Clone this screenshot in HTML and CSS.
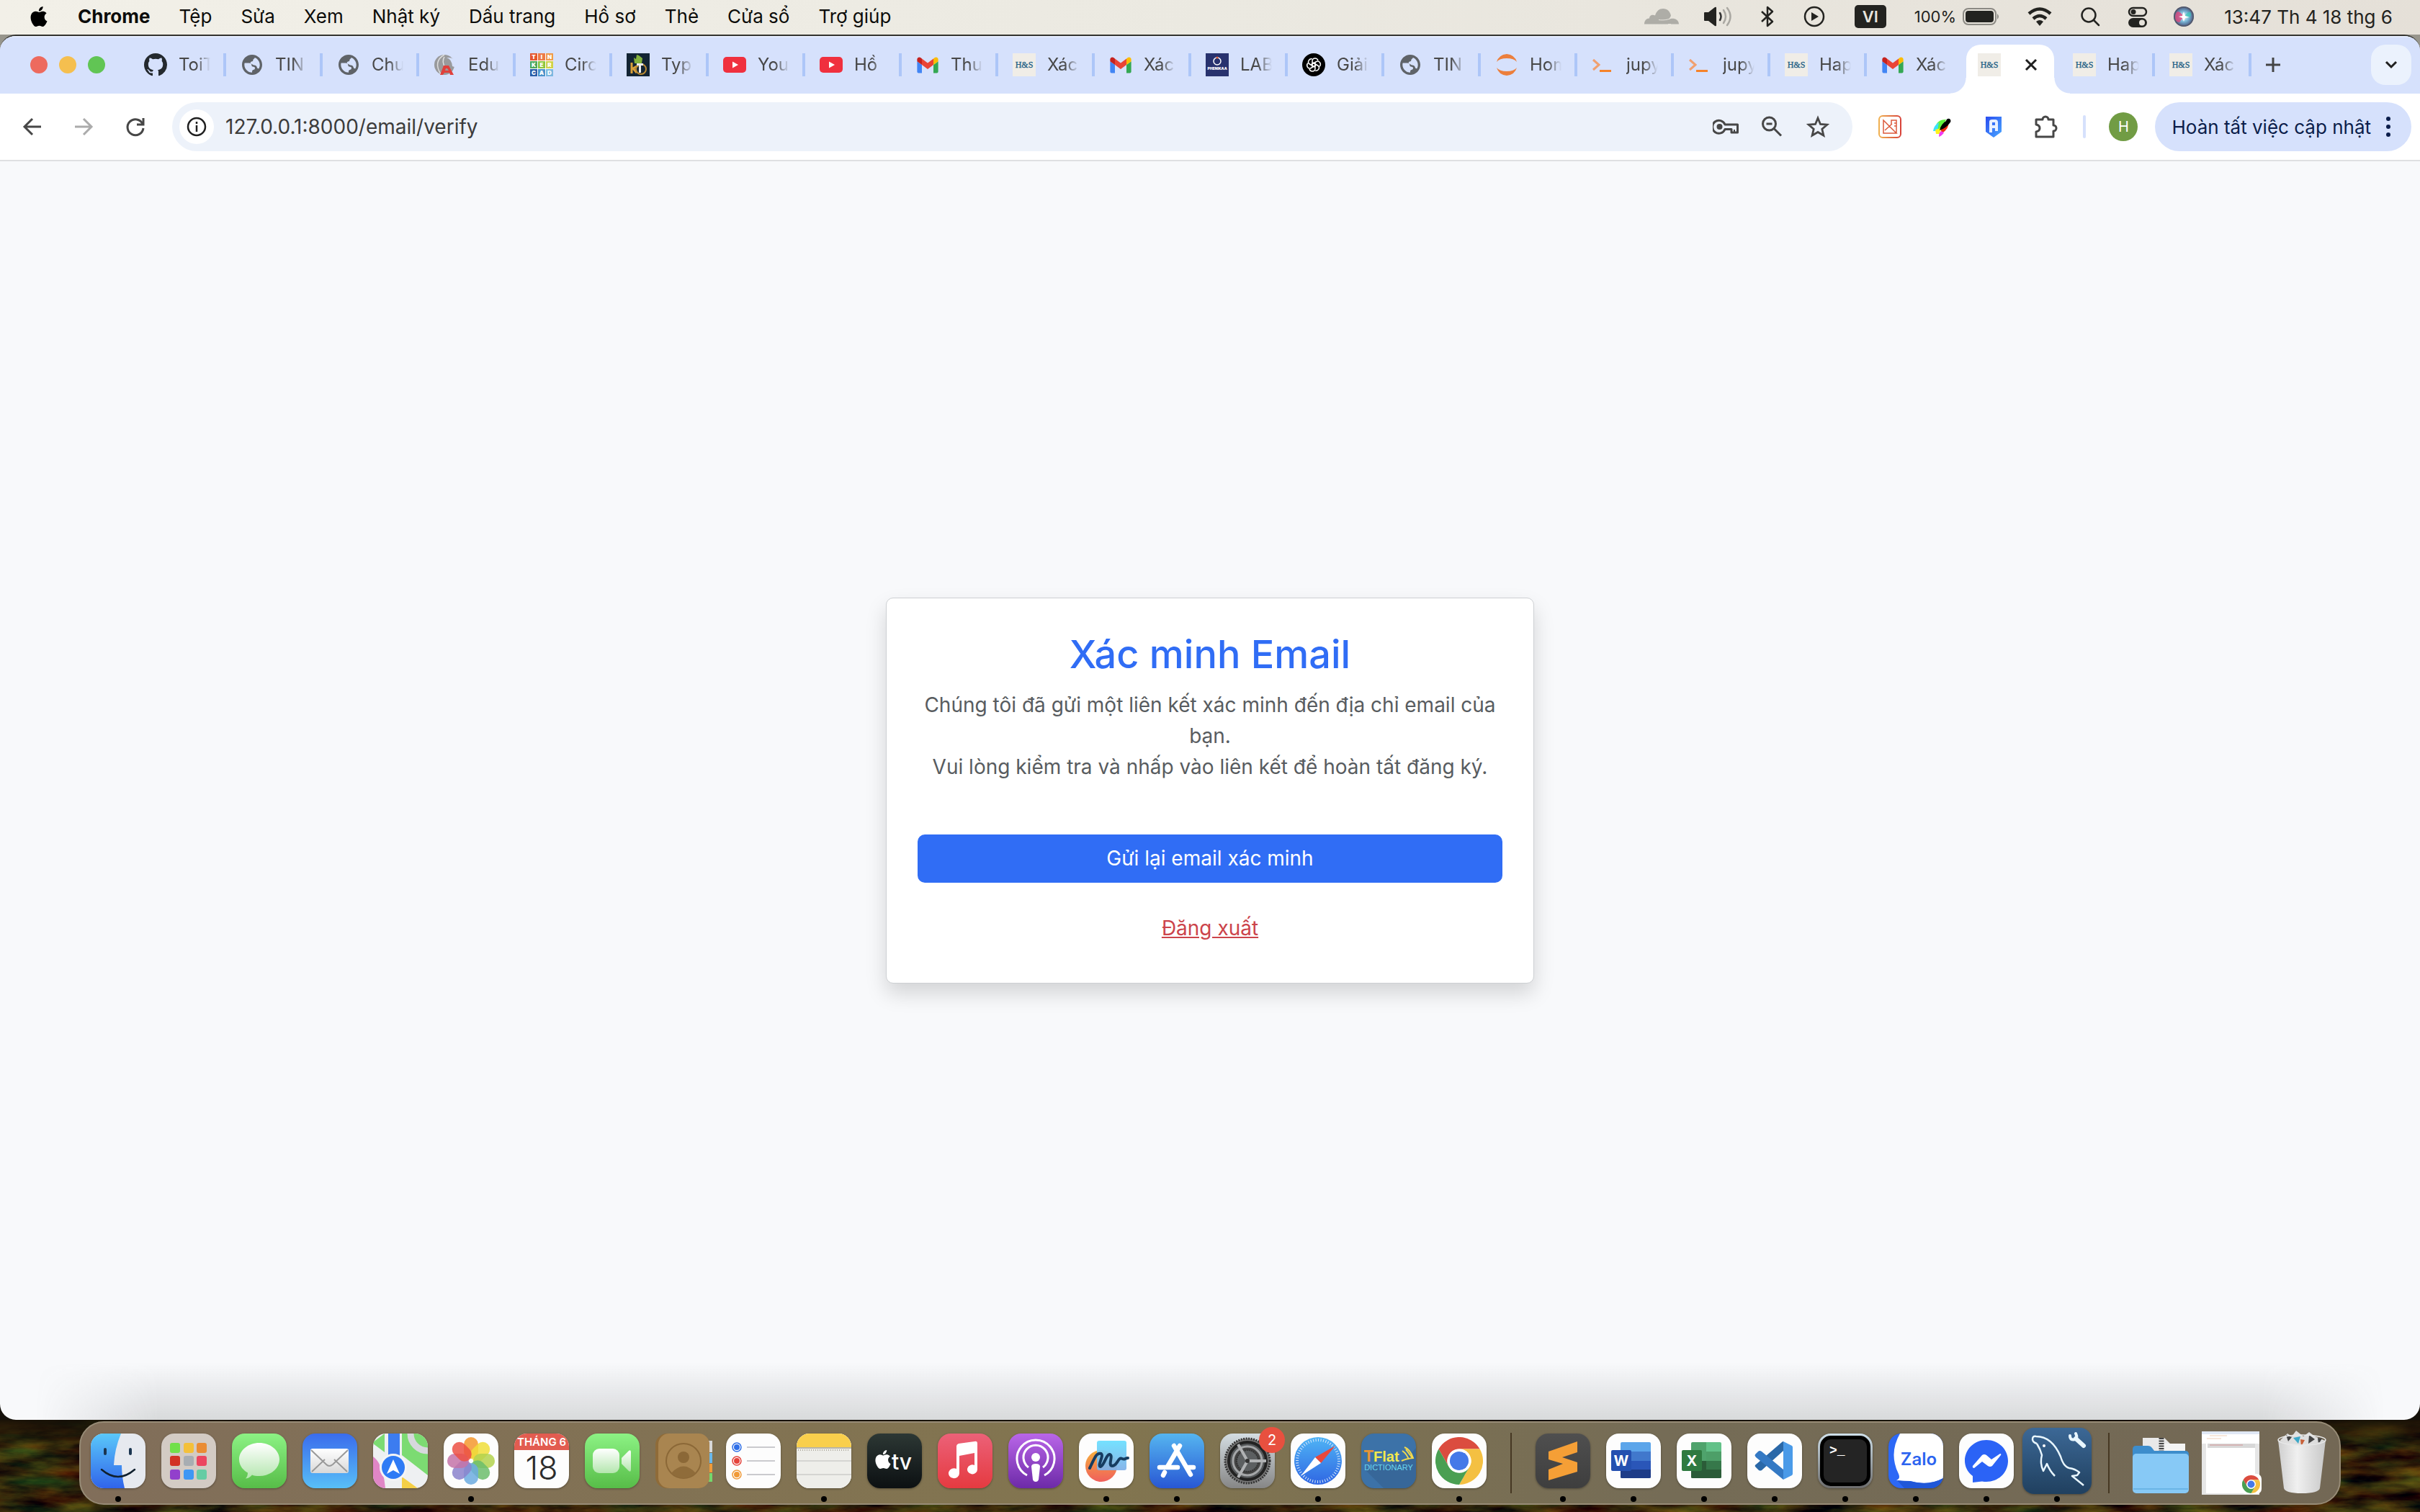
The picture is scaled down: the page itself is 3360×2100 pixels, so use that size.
FILE: index.html
```html
<!DOCTYPE html>
<html lang="vi">
<head>
<meta charset="utf-8">
<title>Xác minh Email</title>
<meta name="viewport" content="width=device-width, initial-scale=1">
<link rel="stylesheet" href="styles.css">
</head>
<body>
<svg class="defs" width="0" height="0" aria-hidden="true">
  <defs>
    <symbol id="apple" viewBox="0 0 24 24"><path d="M12.152 6.896c-.948 0-2.415-1.078-3.96-1.04-2.04.027-3.91 1.183-4.961 3.014-2.117 3.675-.546 9.103 1.519 12.09 1.013 1.454 2.208 3.09 3.792 3.039 1.52-.065 2.09-.987 3.935-.987 1.831 0 2.35.987 3.96.948 1.637-.026 2.676-1.48 3.676-2.948 1.156-1.688 1.636-3.325 1.662-3.415-.039-.013-3.182-1.221-3.22-4.857-.026-3.04 2.48-4.494 2.597-4.559-1.429-2.09-3.623-2.324-4.39-2.376-2-.156-3.675 1.09-4.61 1.09zM15.53 3.83c.843-1.012 1.4-2.427 1.245-3.83-1.207.052-2.662.805-3.532 1.818-.78.896-1.454 2.338-1.273 3.714 1.338.104 2.715-.688 3.559-1.701"/></symbol>
    <symbol id="globe" viewBox="0 0 24 24"><path fill="#5f6368" d="M12 1.500C6.200 1.500 1.500 6.200 1.500 12S6.200 22.500 12 22.500 22.500 17.800 22.500 12 17.800 1.500 12 1.500zm-1 18.430c-3.950-.49-7-3.850-7-7.930 0-.62.08-1.210.21-1.790H9c1.500 0 2.500 1 2.500 2.300 0 1 .8 1.500 2 1.500 1 0 1.500.6 1.500 1.500 0 1.200-1 1.500-1.800 1.700-1 .3-1.200 1-1.200 2.800zM17 14.500c-.3-1.600-1.500-2-2.800-2.100-1.400-.1-1.700-1-2.900-1.400-1.100-.4-1.400-1.300-.6-2 .9-.8 2.300-.3 2.300-1.900 0-1.300 1.600-1.300 1.900-2.600 2.900 1.200 5.100 4.200 5.100 7.500 0 1.500-.3 2.800-1 3.900-.9.300-1.800-.3-2-1.400z"/></symbol>
    <symbol id="github" viewBox="0 0 16 16"><path fill="#24292e" d="M8 0C3.580 0 0 3.580 0 8c0 3.540 2.290 6.530 5.470 7.590.4.07.55-.17.55-.38 0-.19-.01-.82-.01-1.490-2.010.37-2.530-.49-2.690-.94-.09-.23-.48-.94-.82-1.130-.28-.15-.68-.52-.01-.53.63-.01 1.080.58 1.230.82.72 1.210 1.870.87 2.330.66.07-.52.28-.87.51-1.070-1.780-.2-3.640-.89-3.640-3.950 0-.87.31-1.590.82-2.150-.08-.2-.36-1.020.08-2.120 0 0 .67-.21 2.200.82.64-.18 1.320-.27 2-.27s1.360.09 2 .27c1.530-1.040 2.200-.82 2.200-.82.44 1.100.16 1.920.08 2.120.51.56.82 1.270.82 2.150 0 3.070-1.870 3.750-3.650 3.950.29.25.54.73.54 1.480 0 1.070-.01 1.930-.01 2.200 0 .21.15.46.55.38A8.010 8.010 0 0 0 16 8c0-4.420-3.580-8-8-8z"/></symbol>
    <symbol id="gmail" viewBox="-24 -7 560 512"><path fill="#4285f4" d="M35 449h81V251L0 164v250c0 19 16 35 35 35z"/><path fill="#34a853" d="M396 449h81c19 0 35-16 35-35V164l-116 87z"/><path fill="#fbbc04" d="M396 100v151l116-87v-47c0-43-49-68-84-42z"/><path fill="#ea4335" d="M116 251V100l140 104 140-104v151L256 356z"/><path fill="#c5221f" d="M0 117v47l116 87V100L84 75C49 49 0 74 0 117z"/></symbol>
    <symbol id="youtube" viewBox="0 0 32 32"><rect y="5" width="32" height="22" rx="5" fill="#f0303e"/><path fill="#fff" d="M13 11.500v9l8-4.500z"/></symbol>
    <symbol id="hs" viewBox="0 0 32 32"><rect width="32" height="32" fill="#f0ede7"/><text x="16" y="20" text-anchor="middle" font-family="Liberation Serif, serif" font-size="12" fill="#1f5f85" stroke="#1f5f85" stroke-width=".3">H&amp;S</text></symbol>
    <symbol id="prompt" viewBox="0 0 32 32"><path d="M2 9l8 7-8 7" fill="none" stroke="#f0a070" stroke-width="3"/><rect x="11" y="23" width="16" height="3" fill="#f5832a"/></symbol>
    <symbol id="chrome" viewBox="0 0 48 48"><path fill="#db4c3f" d="M24 12h20.800A24 24 0 0 0 3.200 12l10.400 18A12 12 0 0 1 24 12z"/><path fill="#f4c042" d="M34.400 30L24 48a24 24 0 0 0 20.800-36H24a12 12 0 0 1 10.400 18z"/><path fill="#4a9f52" d="M13.600 30L3.200 12A24 24 0 0 0 24 48l10.400-18a12 12 0 0 1-20.800 0z"/><circle cx="24" cy="24" r="12" fill="#fff"/><circle cx="24" cy="24" r="9.500" fill="#4579e8"/></symbol>
    <linearGradient id="gFace" x2="0" y2="1"><stop stop-color="#5ac8fa"/><stop offset="1" stop-color="#3064ea"/></linearGradient>
    <linearGradient id="gSteel" x2="0" y2="1"><stop stop-color="#fff"/><stop offset="1" stop-color="#d8d8d8"/></linearGradient>
    <linearGradient id="gMint" x2="0" y2="1"><stop stop-color="#fff"/><stop offset="1" stop-color="#b4e6ae"/></linearGradient>
    <linearGradient id="gSafari" x2="0" y2="1"><stop stop-color="#4fb4f5"/><stop offset="1" stop-color="#2f66e3"/></linearGradient>
    <linearGradient id="gCyan" x2="0" y2="1"><stop stop-color="#6adfff"/><stop offset="1" stop-color="#7fb0e8"/></linearGradient>
    <linearGradient id="gSun" x2="0" y2="1"><stop stop-color="#f5b03c"/><stop offset="1" stop-color="#f0605c"/></linearGradient>
    <linearGradient id="gExt"><stop stop-color="#f0b050"/><stop offset="1" stop-color="#d8433a"/></linearGradient>
    <linearGradient id="gShield" x2="1" y2="1"><stop stop-color="#2a4cf0"/><stop offset="1" stop-color="#4aa8ff"/></linearGradient>
    <radialGradient id="gSiri"><stop stop-color="#fff"/><stop offset=".5" stop-color="#7ab8d8"/><stop offset="1" stop-color="#48507a"/></radialGradient>
    <linearGradient id="gBin"><stop stop-color="#cfcfcf"/><stop offset=".4" stop-color="#f0f0f0"/><stop offset="1" stop-color="#c8c8c8"/></linearGradient>
    <filter id="field" x="0" y="0" width="100%" height="100%" color-interpolation-filters="sRGB">
      <feTurbulence type="fractalNoise" baseFrequency=".012 .05" numOctaves="5" seed="4"/>
      <feColorMatrix values=".6 .3 0 0 -.25  .3 .5 0 0 -.25  0 .1 0 0 -.01  0 0 0 0 1"/>
    </filter>
  </defs>
</svg>

<header class="menubar">
  <nav class="menus" aria-label="Thanh menu">
    <svg class="menu-logo"><use href="#apple"/></svg>
    <button class="menu menu-app">Chrome</button>
    <button class="menu">Tệp</button>
    <button class="menu">Sửa</button>
    <button class="menu">Xem</button>
    <button class="menu">Nhật ký</button>
    <button class="menu">Dấu trang</button>
    <button class="menu">Hồ sơ</button>
    <button class="menu">Thẻ</button>
    <button class="menu">Cửa sổ</button>
    <button class="menu">Trợ giúp</button>
  </nav>
  <div class="status">
    <svg width="48" height="32" viewBox="0 0 48 32"><path fill="#aeada7" d="M0 26.500c0-5 3-8 7-8 0-4 4-6 8-4C17 8 21 5 26 5c6 0 10 4 11 10l-3 5c5-3 14-1 14 6.500z"/><path d="M33 26.500h4M20 20.500c6 1 14 0 18-3" stroke="#e8e5de" fill="none"/></svg>
    <svg width="46" height="32" viewBox="0 0 46 32"><path fill="#232320" d="M1 11q0-1 1-1h5l9-7q2-1 2 1v24q0 2-2 1l-9-7H2q-1 0-1-1z"/><g fill="none" stroke-width="2.500" stroke-linecap="round"><path stroke="#333" d="M23 11q3 5 0 10"/><path stroke="#aaa8a2" d="M28 7q6 9 0 18M33 4q9 12 0 24"/></g></svg>
    <svg width="18" height="32" viewBox="0 0 18 32"><path d="M1 9l15 14-7 6V3l7 6L1 23" fill="none" stroke="#232320" stroke-width="2.500" stroke-linejoin="round"/></svg>
    <svg width="44" height="32" viewBox="0 0 44 32"><circle cx="22" cy="16" r="13" fill="none" stroke="#232320" stroke-width="2.500"/><path fill="#232320" d="M18 10v12l10-6z"/></svg>
    <span class="input-source">VI</span>
    <span class="battery">100%<svg width="53" height="32" viewBox="0 0 53 32"><rect x="1" y="5" width="45" height="22" rx="7" fill="none" stroke="#8b8983" stroke-width="2"/><rect x="4" y="8" width="39" height="16" rx="4" fill="#232320"/><path fill="#8b8983" d="M48 12q4 4 0 8z"/></svg></span>
    <svg width="40" height="32" viewBox="0 0 40 32"><g fill="none" stroke="#232320" stroke-width="4.500"><path d="M5 12q15-13 30 0"/><path d="M11 19q9-8 18 0"/></g><path fill="#232320" d="M15 23q5-4 10 0l-5 6z"/></svg>
    <svg width="32" height="32" viewBox="0 0 32 32"><g fill="none" stroke="#232320" stroke-width="2.500" stroke-linecap="round"><circle cx="14" cy="14" r="9.500"/><path d="M21 21l7 7"/></g></svg>
    <svg width="32" height="32" viewBox="0 0 32 32"><rect x="4" y="4" width="24" height="11" rx="5.500" fill="none" stroke="#232320" stroke-width="2.500"/><circle cx="10" cy="9.500" r="3.500" fill="#232320"/><rect x="3" y="18" width="26" height="13" rx="6.500" fill="#232320"/><circle cx="22" cy="24.500" r="4" fill="#e6e2da"/></svg>
    <svg width="28" height="32" viewBox="0 0 28 32"><circle cx="14" cy="16" r="14" fill="url(#gSiri)"/><path fill="#e0467c" opacity=".8" d="M14 16Q4 2 2 16q0 8 6 8z"/><path fill="#38c8b8" opacity=".7" d="M14 16Q24 4 24 14q-2 6-10 2z"/><circle cx="14" cy="16" r="13" fill="none" stroke="#555" stroke-width="1.500" opacity=".6"/><path fill="#fff" d="M14 9l2 6 6 2-6 1-2 5-2-5-5-2 5-1z"/></svg>
    <time class="clock">13:47 Th 4 18 thg 6</time>
  </div>
</header>

<div class="window">
  <div class="tabstrip">
    <div class="lights"><button class="light light-close" aria-label="Đóng"></button><button class="light light-min" aria-label="Thu nhỏ"></button><button class="light light-max" aria-label="Phóng to"></button></div>
    <div class="tabs">
      <button class="tab"><svg class="fav"><use href="#github"/></svg><span class="tab-title">ToiT</span></button>
      <button class="tab"><svg class="fav"><use href="#globe"/></svg><span class="tab-title">TIN</span></button>
      <button class="tab"><svg class="fav"><use href="#globe"/></svg><span class="tab-title">Chu</span></button>
      <button class="tab"><svg class="fav" viewBox="0 0 32 32"><circle cx="15" cy="16" r="14" fill="#999a9c"/><path fill="#d6e1fc" d="M32 14q-3-9-14-8 7 2 8 12l6 2z"/><path d="M15 2Q-1 11 10 29M15 5q-4 6 1 15" stroke="#ddd" fill="none" stroke-width="1.500"/><path fill="#e0403c" d="M14 17h7l7 13h-5l-1-3h-7l-2 3H9zm3 4l-1 3h5l-2-3z"/></svg><span class="tab-title">Edu</span></button>
      <button class="tab"><svg class="fav" viewBox="0 0 32 32"><rect width="32" height="32" fill="#fff"/><g><path fill="#e4572e" d="M0 0h10v10H0z"/><path fill="#ec7a48" d="M11 0h10v10H11z"/><path fill="#f09a4a" d="M22 0h10v10H22z"/><path fill="#4da85c" d="M0 11h10v10H0z"/><path fill="#8cc63f" d="M11 11h10v10H11z"/><path fill="#cfd24a" d="M22 11h10v10H22z"/><path fill="#2a5da8" d="M0 22h10v10H0z"/><path fill="#4b93cc" d="M11 22h10v10H11z"/><path fill="#7cb8e0" d="M22 22h10v10H22z"/></g><g fill="#fff" font-family="Inter, sans-serif" font-weight="900" font-size="8" text-anchor="middle"><text x="5" y="8">T</text><text x="16" y="8">I</text><text x="27" y="8">N</text><text x="5" y="19">K</text><text x="16" y="19">E</text><text x="27" y="19">R</text><text x="5" y="30">C</text><text x="16" y="30">A</text><text x="27" y="30">D</text></g></svg><span class="tab-title">Circ</span></button>
      <button class="tab"><svg class="fav" viewBox="0 0 32 32"><rect width="32" height="32" fill="#122433"/><path fill="#84b23c" d="M10 6l3 2 1-6 3 1 5 4-1 7H11z"/><path stroke="#d9a03a" stroke-width="3" fill="none" d="M7 13v15M16 17l-7 4 5 6"/><circle cx="20" cy="22" r="7" fill="none" stroke="#b98a34" stroke-width="2"/><path fill="#eee" d="M14 14h9v3h-3v10h-3V17h-3z"/></svg><span class="tab-title">Typ</span></button>
      <button class="tab"><svg class="fav"><use href="#youtube"/></svg><span class="tab-title">You</span></button>
      <button class="tab"><svg class="fav"><use href="#youtube"/></svg><span class="tab-title">Hồ</span></button>
      <button class="tab"><svg class="fav"><use href="#gmail"/></svg><span class="tab-title">Thu</span></button>
      <button class="tab"><svg class="fav"><use href="#hs"/></svg><span class="tab-title">Xác</span></button>
      <button class="tab"><svg class="fav"><use href="#gmail"/></svg><span class="tab-title">Xác</span></button>
      <button class="tab"><svg class="fav" viewBox="0 0 32 32"><rect width="32" height="32" fill="#28326e"/><circle cx="16" cy="11" r="5" fill="none" stroke="#fff" stroke-width="1.500"/><circle cx="16" cy="6" r="1.500" fill="#e0603c"/><text x="16" y="23" text-anchor="middle" font-family="Inter, sans-serif" font-size="5" font-weight="900" fill="#fff">PHENIKAA</text></svg><span class="tab-title">LAB</span></button>
      <button class="tab"><svg class="fav" viewBox="0 0 32 32"><circle cx="16" cy="16" r="16" fill="#000"/><g fill="none" stroke="#fff" stroke-width="1.500"><path id="petal" d="M14 19v-8q0-4 4-4 3 0 4 3"/><use href="#petal" transform="rotate(60 16 16)"/><use href="#petal" transform="rotate(120 16 16)"/><use href="#petal" transform="rotate(180 16 16)"/><use href="#petal" transform="rotate(240 16 16)"/><use href="#petal" transform="rotate(300 16 16)"/></g></svg><span class="tab-title">Giải</span></button>
      <button class="tab"><svg class="fav"><use href="#globe"/></svg><span class="tab-title">TIN</span></button>
      <button class="tab"><svg class="fav" viewBox="0 0 32 32"><path fill="#ec7f3c" d="M2 12q3-10 14-11 11 1 14 11-4-5-14-5T2 12zM2 20q3 10 14 11 11-1 14-11-4 5-14 5T2 20z"/></svg><span class="tab-title">Hom</span></button>
      <button class="tab"><svg class="fav"><use href="#prompt"/></svg><span class="tab-title">jupy</span></button>
      <button class="tab"><svg class="fav"><use href="#prompt"/></svg><span class="tab-title">jupy</span></button>
      <button class="tab"><svg class="fav"><use href="#hs"/></svg><span class="tab-title">Hap</span></button>
      <button class="tab tab-before"><svg class="fav"><use href="#gmail"/></svg><span class="tab-title">Xác</span></button>
      <button class="tab-active" aria-label="Xác minh Email"><svg class="fav"><use href="#hs"/></svg><svg class="tab-close" viewBox="0 0 24 24"><path d="M5 5l14 14M19 5L5 19" stroke="#1f1f1f" stroke-width="3"/></svg></button>
      <button class="tab"><svg class="fav"><use href="#hs"/></svg><span class="tab-title">Hap</span></button>
      <button class="tab"><svg class="fav"><use href="#hs"/></svg><span class="tab-title">Xác</span></button>
    </div>
    <button class="new-tab" aria-label="Thẻ mới"><svg width="24" height="24" viewBox="0 0 24 24"><path d="M12 2v20M2 12h20" stroke="#444" stroke-width="3"/></svg></button>
    <button class="tab-search" aria-label="Tìm kiếm thẻ"><svg width="24" height="24" viewBox="0 0 24 24"><path d="M5 8l7 7 7-7" fill="none" stroke="#1f1f1f" stroke-width="3"/></svg></button>
  </div>

  <div class="toolbar">
    <button class="nav-btn" aria-label="Quay lại"><svg width="32" height="32" viewBox="0 0 32 32"><path d="M27 16H4M15 5L4 16l11 11" fill="none" stroke="#474747" stroke-width="3"/></svg></button>
    <button class="nav-btn" aria-label="Tiến"><svg width="32" height="32" viewBox="0 0 32 32"><path d="M3 16h23M15 5l11 11-11 11" fill="none" stroke="#ababab" stroke-width="3"/></svg></button>
    <button class="nav-btn" aria-label="Tải lại"><svg width="32" height="32" viewBox="0 0 32 32"><path d="M26 12A11 11 0 1 0 27 18" fill="none" stroke="#474747" stroke-width="3"/><path d="M27 4v9h-9" fill="none" stroke="#474747" stroke-width="3"/></svg></button>
    <div class="omnibox">
      <button class="site-info" aria-label="Thông tin trang"><svg width="28" height="28" viewBox="0 0 28 28"><circle cx="14" cy="14" r="12" fill="none" stroke="#1f1f1f" stroke-width="2.500"/><path d="M14 12v9M14 7v3" stroke="#1f1f1f" stroke-width="2.500"/></svg></button>
      <input class="url" type="text" aria-label="Địa chỉ" value="127.0.0.1:8000/email/verify">
      <button class="omni-btn" aria-label="Mật khẩu"><svg width="36" height="32" viewBox="0 0 36 32"><g fill="none" stroke="#474747" stroke-width="3"><path d="M17 13A9 9 0 1 0 17 19.500H26V24H34.500V13z" stroke-linejoin="round"/></g><circle cx="9.500" cy="16" r="4" fill="#474747"/><path d="M30 20v4" stroke="#474747" stroke-width="2"/></svg></button>
      <button class="omni-btn" aria-label="Thu phóng"><svg width="32" height="32" viewBox="0 0 32 32"><g fill="none" stroke="#474747" stroke-width="3"><circle cx="12.500" cy="12" r="9"/><path d="M19 18.500l10 10M8.500 12h8"/></g></svg></button>
      <button class="omni-btn" aria-label="Dấu trang"><svg width="32" height="32" viewBox="0 0 32 32"><path d="M16 4l3.500 8.500 9.300.7-7 6 2.100 9L16 23.500l-7.900 4.700 2.100-9-7-6 9.300-.7z" fill="none" stroke="#474747" stroke-width="2.800"/></svg></button>
    </div>
    <div class="extensions">
      <button class="ext-btn" aria-label="Tiện ích thước"><svg width="32" height="32" viewBox="0 0 32 32"><rect x="1" y="1" width="30" height="30" rx="5" fill="none" stroke="url(#gExt)" stroke-width="2"/><path d="M7 7v18h18zM18 14V7h7v18M11 11l12 12M9 21l10-9M22 11h3M22 15h3" fill="none" stroke="#dc5a3c" stroke-width="1.500"/></svg></button>
      <button class="ext-btn" aria-label="Tiện ích bút màu"><svg width="32" height="32" viewBox="0 0 32 32"><path fill="#61f23c" d="M22 6Q8 6 7 19l8 2z"/><path fill="#3ce0ff" d="M12 10q-7 4-8 12h6z"/><path fill="#fff21c" d="M7 20l8-2-2 8H8z"/><path fill="#f02c10" d="M25 9q2 10-10 17V18z"/><path fill="#f23cf2" d="M12 30q0-6 3-8l4 2q-2 4-7 6z"/><path fill="#000" d="M13 21q2-9 9-13 1-4 5-3 3 3 0 6-5 7-14 10z"/></svg></button>
      <button class="ext-btn" aria-label="Tiện ích lá chắn"><svg width="32" height="32" viewBox="0 0 32 32"><path fill="url(#gShield)" d="M5 2h22v21l-11 8-11-8z"/><path fill="none" stroke="#e8f0ff" stroke-width="4" d="M12 24V9q0-1 2-1h4q2 0 2 2v12M12 16h8"/></svg></button>
      <button class="ext-btn" aria-label="Tiện ích"><svg width="36" height="36" viewBox="0 0 36 36"><path d="M5 8h9a4 4 0 0 1 8 0h7v8a4 4 0 0 1 0 8v8H5v-7q5-1 5-5t-5-5z" fill="none" stroke="#474747" stroke-width="3" stroke-linejoin="round"/></svg></button>
    </div>
    <span class="divider"></span>
    <button class="avatar" aria-label="Hồ sơ H">H</button>
    <button class="update">Hoàn tất việc cập nhật<svg width="8" height="32" viewBox="0 0 8 32"><g fill="#0b1d4a"><circle cx="4" cy="5" r="3"/><circle cx="4" cy="16" r="3"/><circle cx="4" cy="27" r="3"/></g></svg></button>
  </div>

  <main class="page">
    <section class="card">
      <h2 class="card-title">Xác minh Email</h2>
      <p class="card-text">Chúng tôi đã gửi một liên kết xác minh đến địa chỉ email của bạn.<br>Vui lòng kiểm tra và nhấp vào liên kết để hoàn tất đăng ký.</p>
      <button class="btn-primary">Gửi lại email xác minh</button>
      <a class="logout" href="#logout">Đăng xuất</a>
    </section>
  </main>
</div>

<footer class="desk">
  <svg class="wallpaper" aria-hidden="true"><rect width="100%" height="100%" filter="url(#field)"/></svg>
  <nav class="dock" aria-label="Dock">
    <div class="slot running"><span class="app"><svg viewBox="0 0 76 76"><path fill="#e6e9ef" d="M0 0h76v76H0z"/><path fill="url(#gFace)" d="M0 0h42Q33 22 32 44h11q0 16 4 32H0z"/><path d="M20 22v6M55 22v6" stroke="#1b3550" stroke-width="4" stroke-linecap="round"/><path d="M15 50q23 20 46 0" fill="none" stroke="#10202e" stroke-width="2.500" stroke-linecap="round"/></svg></span></div>
    <div class="slot"><span class="app app-launch"><svg viewBox="0 0 76 76"><g><rect x="12" y="13" width="14" height="14" rx="3" fill="#71e04a"/><rect x="31" y="13" width="14" height="14" rx="3" fill="#f4c03a"/><rect x="49" y="13" width="14" height="14" rx="3" fill="#ea8c34"/><rect x="12" y="31" width="14" height="14" rx="3" fill="#d23325"/><rect x="31" y="31" width="14" height="14" rx="3" fill="#a8adb2"/><rect x="49" y="31" width="14" height="14" rx="3" fill="#ec4560"/><rect x="12" y="50" width="14" height="14" rx="3" fill="#9240cc"/><rect x="31" y="50" width="14" height="14" rx="3" fill="#3e97f4"/><rect x="49" y="50" width="14" height="14" rx="3" fill="#66cca4"/></g></svg></span></div>
    <div class="slot"><span class="app app-green"><svg viewBox="0 0 76 76"><path fill="url(#gMint)" d="M38 13c15 0 28 10 28 23S53 59 38 59c-4 0-8-.5-10-1.500-2 2-5 5-9 5 2-2 3-5 3-8C14 50 10 43 10 36c0-13 13-23 28-23z"/></svg></span></div>
    <div class="slot"><span class="app app-mail"><svg viewBox="0 0 76 76"><rect x="11" y="21" width="53" height="34" rx="3" fill="url(#gSteel)"/><path d="M13 53l18-17M62 53L44 36M12 23l21 20q4 4 9 0l21-20" fill="none" stroke="#999" stroke-width="2"/></svg></span></div>
    <div class="slot"><span class="app"><svg viewBox="0 0 76 76"><path fill="#eef0f2" d="M0 0h76v76H0z"/><path fill="#7cdb72" d="M0 12L16 0v26L0 14zM40 0h36v58L40 30z"/><circle cx="76" cy="0" r="24" fill="none" stroke="#d6d8dc" stroke-width="9"/><path fill="#e086c6" d="M0 32q14 10 17 44H0z"/><path fill="#f5cf46" d="M40 60l22 16H40z"/><path fill="#3c7cf0" d="M21 0h16v32H21z"/><circle cx="28" cy="47" r="19" fill="#f4f4f6"/><circle cx="28" cy="47" r="16" fill="#2f7bf5"/><path fill="#fff" d="M28 36l9 20-9-5-9 5z"/></svg></span></div>
    <div class="slot running"><span class="app app-white"><svg viewBox="0 0 76 76"><g transform="translate(38 38)" fill-opacity=".85"><rect x="-10" y="-33" width="20" height="30" rx="10" fill="#f5982e"/><rect x="-10" y="-33" width="20" height="30" rx="10" fill="#f0de3a" transform="rotate(45)"/><rect x="-10" y="-33" width="20" height="30" rx="10" fill="#b3d24e" transform="rotate(90)"/><rect x="-10" y="-33" width="20" height="30" rx="10" fill="#6cbd6c" transform="rotate(135)"/><rect x="-10" y="-33" width="20" height="30" rx="10" fill="#6cabe0" transform="rotate(180)"/><rect x="-10" y="-33" width="20" height="30" rx="10" fill="#8b83cc" transform="rotate(225)"/><rect x="-10" y="-33" width="20" height="30" rx="10" fill="#c473a8" transform="rotate(270)"/><rect x="-10" y="-33" width="20" height="30" rx="10" fill="#ec5044" transform="rotate(315)"/></g></svg></span></div>
    <div class="slot"><span class="app app-white app-cal"><span class="cal-month">THÁNG 6</span><span class="cal-day">18</span></span></div>
    <div class="slot"><span class="app app-green"><svg viewBox="0 0 76 76"><rect x="11" y="21" width="37" height="34" rx="9" fill="url(#gMint)"/><path fill="url(#gMint)" d="M51 34l10-10q3-2 3 2v24q0 4-3 2L51 42z"/></svg></span></div>
    <div class="slot"><span class="app app-contacts"><svg viewBox="0 0 76 76"><path fill="#d8d8d8" d="M72 10h7v16h-7z"/><path fill="#68b8ec" d="M72 27h7v14h-7z"/><path fill="#f09a38" d="M72 42h7v12h-7z"/><path fill="#74d86c" d="M72 55h7v12h-7z"/><rect width="75" height="76" rx="16" fill="#8f6b38"/><rect x="4" width="71" height="76" rx="15" fill="#a98550"/><g fill="none" stroke="#8b6837" stroke-width="2"><circle cx="39" cy="38" r="24"/></g><circle cx="39" cy="33" r="8" fill="#8b6837"/><path fill="#8f6c3a" d="M22 55q17-19 34 0-17 14-34 0z"/></svg></span></div>
    <div class="slot"><span class="app app-white"><svg viewBox="0 0 76 76"><g fill="none" stroke-width="1.500"><circle cx="15" cy="19" r="6" stroke="#2f6fe8"/><circle cx="15" cy="38" r="6" stroke="#e5433c"/><circle cx="15" cy="57" r="6" stroke="#f09a38"/></g><circle cx="15" cy="19" r="4" fill="#2f6fe8"/><circle cx="15" cy="38" r="4" fill="#e5433c"/><circle cx="15" cy="57" r="4" fill="#f09a38"/><path d="M29 19h39M29 38h39M29 57h39" stroke="#b9b9be" stroke-width="1.500"/></svg></span></div>
    <div class="slot running"><span class="app app-white"><svg viewBox="0 0 76 76"><path fill="#eeeeea" d="M0 0h76v76H0z"/><path fill="#f9cf4c" d="M0 0h76v19H0z"/><path d="M0 20h76" stroke="#b8b4a8" stroke-width="2"/><path d="M2 23h72" stroke="#b0aca0" stroke-width="2" stroke-dasharray="1 2"/><path d="M0 38h76M0 57h76" stroke="#d5d5d2" stroke-width="2"/></svg></span></div>
    <div class="slot"><span class="app app-tv"><svg viewBox="0 0 76 76"><use href="#apple" x="9" y="22" width="26" height="28" fill="#fff"/><text x="34" y="50" font-family="Inter, sans-serif" font-size="30" font-weight="500" fill="#fff">tv</text></svg></span></div>
    <div class="slot"><span class="app app-music"><svg viewBox="0 0 76 76"><path fill="#fff" d="M26 18q0-3 3-4l22-3q4-1 4 3v36a7 6.500 0 1 1-4-6V27l-21 4v24a7.500 7 0 1 1-4-6z"/></svg></span></div>
    <div class="slot"><span class="app app-podcast"><svg viewBox="0 0 76 76"><g fill="none" stroke="#fff" stroke-width="3"><path d="M26 58a26 26 0 1 1 24 0"/><path d="M28 47a17 17 0 1 1 20 0"/></g><circle cx="38" cy="33" r="6" fill="#fff"/><path fill="#fff" d="M32 46q0-4 6-4t6 4l-2 18q-1 3-4 3t-4-3z"/></svg></span></div>
    <div class="slot running"><span class="app app-white"><svg viewBox="0 0 76 76"><circle cx="31" cy="45" r="22" fill="url(#gSun)"/><rect x="25" y="10" width="41" height="41" rx="3" fill="url(#gCyan)" opacity=".93"/><path d="M15 48C22 34 24 26 31 28c4 3-6 17-1 18 5-1 8-18 13-17 5 2-3 15 3 16 8 0 8-13 14-10 4 2 4-1 8-1" fill="none" stroke="#173c60" stroke-width="4" stroke-linecap="round"/></svg></span></div>
    <div class="slot running"><span class="app app-store"><svg viewBox="0 0 76 76"><g stroke="#fff" stroke-width="6.500" stroke-linecap="round"><path d="M34 17l23 40M42 17L25 46M21 54l-2 4M14 47h25M52 47h9"/></g></svg></span></div>
    <div class="slot"><span class="app app-gear"><svg viewBox="0 0 76 76"><circle cx="38" cy="38" r="31" fill="#777" stroke="#333" stroke-width="3" stroke-dasharray="2 1.500"/><circle cx="38" cy="38" r="26" fill="#55585a" stroke="#222" stroke-width="4"/><circle cx="38" cy="38" r="20" fill="#444" stroke="#a4a6a8" stroke-width="3"/><circle cx="38" cy="38" r="15" fill="#5c5f61" stroke="#333" stroke-width="2" stroke-dasharray="2 1"/><path d="M38 38h26M38 38L25 15M38 38L25 61" stroke="#b0b2b4" stroke-width="4"/><circle cx="38" cy="38" r="3" fill="#333"/></svg></span><span class="badge">2</span></div>
    <div class="slot running"><span class="app app-white"><svg viewBox="0 0 76 76"><circle cx="38" cy="38" r="33" fill="url(#gSafari)"/><circle cx="38" cy="38" r="29" fill="none" stroke="#d8e8fb" stroke-width="4" stroke-dasharray="1 2.500"/><path fill="#e9483c" d="M62 17L34 33l8 8z"/><path fill="#fff" d="M14 59l20-26 8 8z"/></svg></span></div>
    <div class="slot"><span class="app app-tflat"><svg viewBox="0 0 76 76"><path fill="#33608f" d="M5 50l26 26H76V20L60 38z" opacity=".6"/><text x="3" y="39" font-family="Inter, sans-serif" font-size="22" font-weight="700" fill="#e59536">T</text><text x="17" y="39" font-family="Liberation Sans, sans-serif" font-size="20" font-weight="700" fill="#f2e94e">Flat</text><text x="38" y="51" text-anchor="middle" font-family="Liberation Sans, sans-serif" font-size="11" fill="#6ad6ee">DICTIONARY</text><path d="M60 19q8 3 12 15-10 1-16 4M57 24q6 4 9 12M62 22l9 12" fill="none" stroke="#f2d94e" stroke-width="2"/></svg></span></div>
    <div class="slot running"><span class="app app-white"><svg viewBox="0 0 76 76"><use href="#chrome" x="5" y="5" width="66" height="66"/></svg></span></div>
    <span class="dock-sep"></span>
    <div class="slot running"><span class="app app-sublime"><svg viewBox="0 0 76 76"><path fill="#f59f36" d="M18 25l40-14v15L37 33l21 7v13L18 65V50l20-8-20-6z"/></svg></span></div>
    <div class="slot running"><span class="app app-white"><svg viewBox="0 0 76 76"><path fill="#5ba5ea" d="M20 14q0-2 2-2h38q2 0 2 2v11H20z"/><path fill="#4178cc" d="M20 25h42v13H20z"/><path fill="#2a56b8" d="M20 38h42v12H20z"/><path fill="#1e3c88" d="M20 50h42v11q0 1-2 1H22q-2 0-2-1z"/><rect x="7" y="23" width="28" height="29" rx="2" fill="#2450b0"/><text x="21" y="45" text-anchor="middle" font-family="Inter, sans-serif" font-size="20" font-weight="700" fill="#fff">W</text></svg></span></div>
    <div class="slot running"><span class="app app-white"><svg viewBox="0 0 76 76"><path fill="#4fa36c" d="M20 14q0-2 2-2h19v26H20z"/><path fill="#62c188" d="M41 12h19q2 0 2 2v11H41z"/><path fill="#4d9f68" d="M41 25h21v13H41z"/><path fill="#2b5c38" d="M20 38h42v23q0 1-2 1H22q-2 0-2-1z"/><path fill="#36784a" d="M41 38h21v12H41z"/><rect x="7" y="23" width="28" height="29" rx="2" fill="#2f7a40"/><text x="21" y="45" text-anchor="middle" font-family="Inter, sans-serif" font-size="20" font-weight="700" fill="#fff">X</text></svg></span></div>
    <div class="slot running"><span class="app app-white"><svg viewBox="0 0 76 76"><path fill="#2a68a8" d="M11 46l5 5q2 1 4 0l30-27V11q-1 0-2 1L12 43q-2 1-1 3z"/><path fill="#3479c4" d="M11 29l4-4q2-2 5 0l30 25v14L12 33q-2-2-1-4z"/><path fill="#4a9ae8" d="M50 11l12 6q1 1 1 2v37q0 1-1 2l-12 6z"/></svg></span></div>
    <div class="slot running"><span class="app app-term"><span class="term-screen">&gt;_</span></span></div>
    <div class="slot running"><span class="app app-zalo"><svg viewBox="0 0 76 76"><path fill="#fff" d="M16 0h60v62Q54 74 30 66q-8 1-19-1 6-2 3-9Q0 28 16 0z"/><path fill="#2057d8" d="M76 62v14H22L12 65q10 1 18 1 26 7 46-4z"/><text x="42" y="44" text-anchor="middle" font-family="Inter, sans-serif" font-size="24" font-weight="600" fill="#2c64f0">Zalo</text></svg></span></div>
    <div class="slot running"><span class="app app-white"><svg viewBox="0 0 76 76"><path fill="#2b63f6" d="M38 9c17 0 30 13 30 29S55 67 38 67q-3 0-6-.6L19 68V59C12 54 8 46 8 38 8 22 21 9 38 9z"/><path fill="#fff" d="M19 45l13-15q3-2 6 0l7 6 12-8q2 0 1 2L46 45q-3 2-6 0l-8-6-11 9q-3 0-2-3z"/></svg></span></div>
    <div class="slot running"><span class="app app-big"><svg viewBox="0 0 92 92"><g fill="none" stroke="#e8f6ff" stroke-width="2.500" stroke-linejoin="round"><path d="M18 22q-6-2-6-6 0-5 5-4 22 0 34 28 4 14 12 16 8 1 14 6l-3 4-7 1 16 13M18 22q5 8 7 16-3 12 2 22l5-10q4 10 11 17"/></g><circle cx="28" cy="25" r="2" fill="#fff"/><g fill="none" stroke="#e8f6ff" stroke-linecap="round"><path stroke-width="4" d="M64 11q0 7 7 5 4-2 1-8"/><path stroke-width="6" d="M72 15l11 10"/></g></svg></span></div>
    <span class="dock-sep"></span>
    <div class="slot"><svg class="item" viewBox="0 0 84 96"><path fill="#e9e9e9" d="M17 14h30l12 12v10H17z"/><path fill="#f4f4f4" d="M46 22h30v14H46z"/><path stroke="#444" stroke-width="7" stroke-dasharray="2 1.500" d="M43 14v20"/><path fill="#3d8dcc" d="M3 30q0-5 5-5h16q4 0 6 3l3 4h43q5 0 5 5v30H3z"/><rect x="3" y="36" width="78" height="55" rx="5" fill="#87c9f6"/><path d="M4 85h76" stroke="#62aee0" stroke-width="1.500"/></svg></div>
    <div class="slot"><svg class="item" viewBox="0 0 84 96"><path fill="#fff" d="M1 5h80v88H1z"/><path fill="#dfe7f4" d="M1 5h80v4H1z"/><path fill="#e6e6e6" d="M1 22h80v71H1z"/><path fill="#fff" d="M7 22h68v69H7z"/><path fill="#d8d8d8" d="M9 22h66v6H9z"/><path d="M12 24h46" stroke="#d05050" stroke-opacity=".5"/><path d="M8 15h20M12 11h24" stroke="#e0a070" stroke-opacity=".5"/><rect x="55" y="64" width="29" height="28" rx="7" fill="#fff"/><use href="#chrome" x="57" y="66" width="25" height="25"/></svg></div>
    <div class="slot"><svg class="item" viewBox="0 0 84 96"><path fill="#dedede" d="M12 17l10-9 6 4 6-8 10 8 8-6 8 6 14 6-6 14H16z"/><path fill="#444" d="M20 10l8 3-5 6zM52 10l8 6-9 6zM64 14l6 1-5 8z"/><path fill="#3ca8c8" d="M30 14l10-2-3 10z"/><path fill="#c86038" d="M40 16l6 1-5 9z"/><path fill="url(#gBin)" d="M9 17q33 13 66 0l-8 67q-2 7-25 7t-25-7z"/><ellipse cx="42" cy="17" rx="33" ry="7" fill="none" stroke="#e8e8e8" stroke-width="1.500"/></svg></div>
  </nav>
</footer>
</body>
</html>
```
FILE: styles.css
```css
* { box-sizing: border-box; }

body {
  margin: 0;
  min-height: 100vh;
  display: flex;
  flex-direction: column;
  font-family: Inter, "Liberation Sans", sans-serif;
  font-size: 26px;
  color: #1f1f1f;
  background: linear-gradient(#97958c 50%, #14100a 50%);
}

button {
  font: inherit;
  color: inherit;
  border: 0;
  padding: 0;
  margin: 0;
  background: none;
}

svg { display: block; flex: none; }
.defs { position: absolute; }

/* Menu bar */
.menubar {
  display: flex;
  justify-content: space-between;
  align-items: center;
  height: 48px;
  padding: 0 38px 2px 40px;
  background: linear-gradient(90deg, #f2f0e8, #ebe9e1 50%, #e5e0d8);
  color: #0c0c0a;
}
.menus { display: flex; align-items: center; gap: 40px; }
.menu-logo { width: 28px; height: 30px; }
.menu { white-space: nowrap; line-height: 44px; }
.menu-app { font-weight: 700; }
.status {
  display: flex;
  align-items: center;
  gap: 34px;
  color: #232320;
}
.input-source {
  width: 44px;
  height: 32px;
  margin-right: 5px;
  border-radius: 5px;
  background: #232320;
  color: #e8e5de;
  font-size: 22px;
  font-weight: 600;
  line-height: 32px;
  text-align: center;
}
.battery { display: flex; align-items: center; gap: 9px; font-size: 22px; }
.clock { min-width: 242px; text-align: right; white-space: nowrap; }

/* Browser window */
.window {
  flex: 1;
  display: flex;
  flex-direction: column;
  border-top: 2px solid #33332f;
  border-radius: 22px;
  overflow: hidden;
  background: #f8f9fb;
}
.tabstrip {
  display: flex;
  align-items: center;
  height: 80px;
  padding: 0 12px 0 42px;
  background: #d6e1fc;
  box-shadow: inset 0 2px #e6edfd;
}
.lights { display: flex; gap: 16px; width: 138px; }
.light { width: 24px; height: 24px; border-radius: 50%; }
.light-close { background: #ed6a5e; }
.light-min { background: #f5bf4f; }
.light-max { background: #61c554; }
.tabs { display: flex; align-items: center; height: 80px; min-width: 0; }
.tab {
  display: flex;
  align-items: center;
  gap: 16px;
  width: 134px;
  min-width: 0;
  height: 32px;
  padding: 0 18px 0 20px;
  border-right: 4px solid #adc6f8;
  color: #474747;
}
.tab-before { border-color: transparent; margin-right: 4px; }
.fav { width: 32px; height: 32px; }
.tab-title {
  flex: 1;
  min-width: 0;
  overflow: hidden;
  text-align: left;
  font-size: 24px;
  line-height: 40px;
  white-space: nowrap;
  mask-image: linear-gradient(90deg, #000 55%, transparent);
}
.tab-active {
  align-self: flex-end;
  position: relative;
  display: flex;
  align-items: center;
  gap: 30px;
  width: 122px;
  height: 68px;
  margin-right: 6px;
  padding: 0 16px 12px;
  border-radius: 20px 20px 0 0;
  background: #fff;
}
/* flared feet of the selected tab */
.tab-active::before,
.tab-active::after {
  content: "";
  position: absolute;
  bottom: 0;
  width: 22px;
  height: 22px;
}
.tab-active::before { right: 100%; background: radial-gradient(circle at 0 0, transparent 21px, #fff 22px); }
.tab-active::after { left: 100%; background: radial-gradient(circle at 100% 0, transparent 21px, #fff 22px); }
.tab-close { width: 24px; height: 24px; }
.new-tab { display: flex; margin-left: 18px; }
.tab-search {
  display: flex;
  align-items: center;
  justify-content: center;
  width: 56px;
  height: 56px;
  margin-left: auto;
  border-radius: 20px;
  background: #ebf2fd;
}

.toolbar {
  display: flex;
  align-items: center;
  height: 94px;
  padding: 0 12px 0 10px;
  border-bottom: 2px solid #dfe0e2;
  background: #fff;
}
.nav-btn, .ext-btn, .omni-btn { display: flex; justify-content: center; }
.nav-btn { width: 71px; }
.omnibox {
  display: flex;
  align-items: center;
  flex: 1;
  height: 68px;
  margin-left: 16px;
  padding: 0 16px 0 10px;
  border-radius: 34px;
  background: #edf2fa;
}
.site-info {
  display: flex;
  align-items: center;
  justify-content: center;
  width: 48px;
  height: 48px;
  border-radius: 50%;
  background: #fff;
}
.url {
  flex: 1;
  min-width: 0;
  padding: 0 0 0 16px;
  border: 0;
  outline: 0;
  background: none;
  font: inherit;
  font-size: 28px;
  color: #3c3c3c;
}
.omni-btn { width: 64px; }
.extensions { display: flex; margin-left: 16px; }
.ext-btn { width: 72px; align-items: center; }
.divider { width: 4px; height: 32px; margin: 0 32px 0 16px; background: #d6e1fc; border-radius: 2px; }
.avatar {
  width: 40px;
  height: 40px;
  border-radius: 50%;
  background: #719c44;
  color: #fff;
  font-size: 20px;
}
.update {
  display: flex;
  align-items: center;
  gap: 20px;
  height: 68px;
  margin-left: 24px;
  padding: 0 28px 0 23px;
  border-radius: 34px;
  background: #d6e1fc;
  color: #0b1d4a;
  white-space: nowrap;
}

/* Page */
.page {
  flex: 1;
  display: flex;
  align-items: center;
  justify-content: center;
}
.card {
  display: flex;
  flex-direction: column;
  width: 100%;
  max-width: 900px;
  padding: 43px;
  border: 1px solid #cdd0d3;
  border-radius: 10px;
  background: #fff;
  box-shadow: 0 14px 29px rgba(0, 0, 0, .15);
  text-align: center;
  font-size: 28px;
  line-height: 43px;
}
.card-title {
  margin: 0 0 14px;
  font-size: 54px;
  font-weight: 500;
  line-height: 70px;
  color: #306df5;
}
.card-text { margin: 0 0 72px; color: #585c60; }
.btn-primary {
  height: 67px;
  border-radius: 10px;
  background: #306df5;
  color: #fff;
}
.logout {
  align-self: center;
  margin: 42px 0 12px;
  line-height: 42px;
  color: #cc444b;
  text-decoration: underline;
}

/* Desktop strip and dock */
.desk {
  position: relative;
  display: flex;
  justify-content: center;
  padding: 2px 110px 10px;
  background: #140e07;
}
.desk::before {
  content: "";
  position: absolute;
  left: 0;
  right: 0;
  bottom: 100%;
  height: 80px;
  background: linear-gradient(180deg, rgba(120, 130, 120, 0), rgba(90, 94, 96, .2));
  mask-image: linear-gradient(90deg, transparent 50px, #000 220px calc(100% - 220px), transparent calc(100% - 50px));
}
.wallpaper {
  position: absolute;
  inset: 0;
  width: 100%;
  height: 100%;
  mask-image: linear-gradient(180deg, rgba(0, 0, 0, .1), #000 40px);
}
.dock {
  position: relative;
  display: flex;
  justify-content: center;
  width: 100%;
  height: 116px;
  border: 2px solid #978b76;
  border-radius: 34px;
  background: linear-gradient(90deg, #816e5a, #82754f 45%, #756c56 70%, #736855);
}
.slot {
  position: relative;
  display: flex;
  justify-content: center;
  flex: 0 1 98px;
}
.running::after {
  content: "";
  position: absolute;
  bottom: 2px;
  width: 8px;
  height: 8px;
  border-radius: 50%;
  background: #000;
}
.app {
  flex: none;
  width: 76px;
  height: 76px;
  margin-top: 15px;
  border-radius: 18px;
  overflow: hidden;
  box-shadow: 0 1px 3px rgba(0, 0, 0, .35);
}
.app svg { width: 100%; height: 100%; }
.app-white { background: #fdfdfd; }
.app-launch { background: #d3cbc4; }
.app-green { background: linear-gradient(#8cf284, #57bd48); }
.app-mail { background: linear-gradient(#3a6cec, #58bff8); }
.app-contacts { overflow: visible; box-shadow: none; }
.app-contacts svg { overflow: visible; }
.app-tv { background: linear-gradient(#2c3734, #0c1012); }
.app-music { background: linear-gradient(#ec6178, #e53a40); }
.app-podcast { background: linear-gradient(#b966e8, #6d2aa8); }
.app-store { background: linear-gradient(#55b5f0, #2857d4); }
.app-gear { background: linear-gradient(#d4dde2, #868686); }
.app-tflat { background: #3c72a8; }
.app-sublime { background: linear-gradient(#4f4f4f, #3e3e3e); }
.app-zalo { background: #2c68f6; }
.app-big {
  width: 96px;
  height: 92px;
  margin-top: 7px;
  border-radius: 16px;
  background: linear-gradient(#3c6896, #20405f);
}
.app-term {
  display: flex;
  padding: 3px;
  background: linear-gradient(#cfe0ea, #6d6d6d);
}
.term-screen {
  flex: 1;
  padding: 0 8px;
  border: 5px solid #000;
  border-radius: 15px;
  background: #242424;
  color: #fff;
  font: 700 18px/32px "Liberation Mono", monospace;
}
.app-cal { display: flex; flex-direction: column; text-align: center; color: #2c2c2c; }
.cal-month {
  background: #e25c50;
  color: #fff;
  font-size: 15px;
  font-weight: 600;
  line-height: 23px;
  white-space: nowrap;
}
.cal-day { font-size: 45px; font-weight: 300; line-height: 50px; }
.badge {
  position: absolute;
  top: 6px;
  right: -3px;
  width: 36px;
  height: 36px;
  border-radius: 50%;
  background: #e8503f;
  color: #fff;
  font-size: 20px;
  line-height: 36px;
  text-align: center;
}
.dock-sep { flex: none; width: 2px; height: 84px; margin: 14px 22px 0; background: #463823; }
.item { width: 84px; height: 96px; margin-top: 7px; }
```
